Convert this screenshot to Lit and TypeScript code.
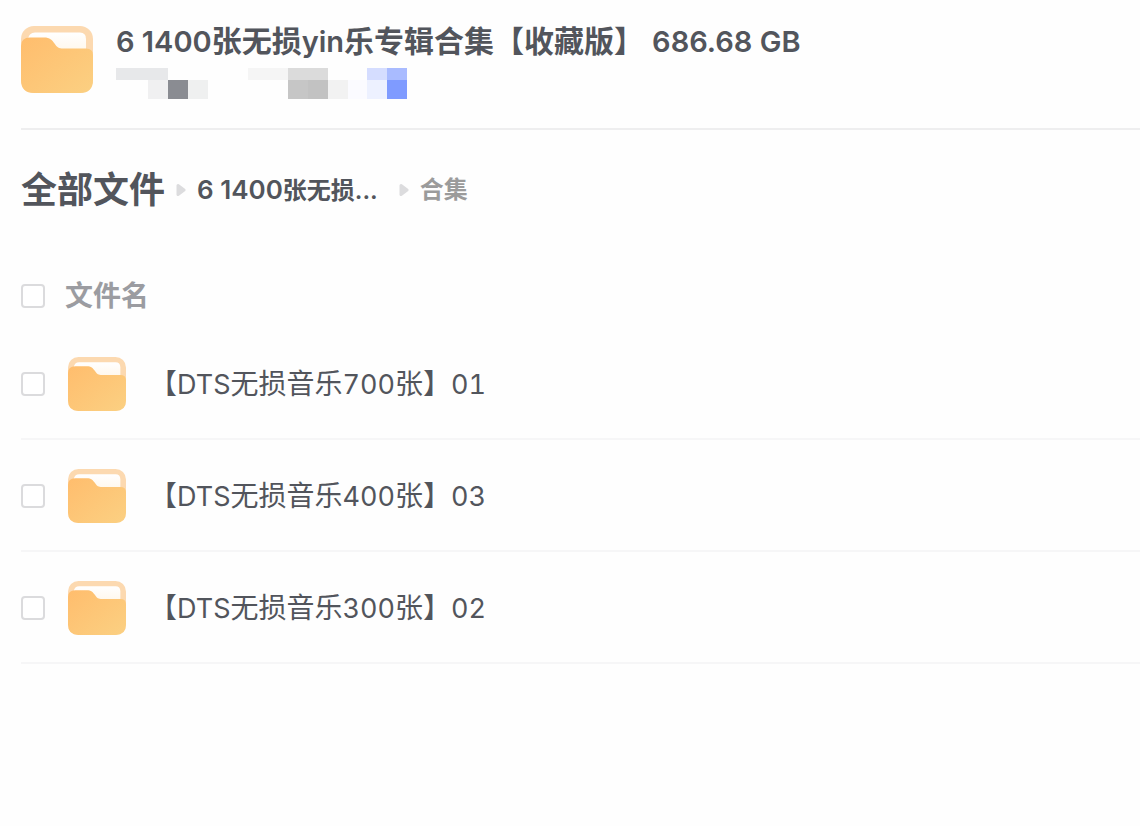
import { LitElement, html, css, svg } from "lit";
import { customElement, property, state } from "lit/decorators.js";

interface FileEntry {
  id: string;
  name: string;
}

/* Wraps runs of Latin letters and digits so they can be sized against the Chinese text. */
const mixed = (text: string) =>
  text
    .split(/([0-9A-Za-z][0-9A-Za-z. ]*)/)
    .filter((part) => part !== "")
    .map((part) => (/^[0-9A-Za-z]/.test(part) ? html`<span class="latin">${part}</span>` : part));

@customElement("folder-icon")
class FolderIcon extends LitElement {
  static styles = css`
    :host {
      display: block;
    }
    svg {
      display: block;
      width: 100%;
      height: auto;
    }
  `;

  render() {
    return html`
      <svg viewBox="0 0 72 67" aria-hidden="true">
        <defs>
          <linearGradient id="front" x1="0" y1="0" x2="1" y2="1">
            <stop offset="0" stop-color="#ffbd6d" />
            <stop offset="1" stop-color="#fbd082" />
          </linearGradient>
          <linearGradient id="paper" x1="0" y1="0" x2="0" y2="1">
            <stop offset="0" stop-color="#ffffff" />
            <stop offset="1" stop-color="#fff6e8" />
          </linearGradient>
        </defs>
        <rect width="72" height="67" rx="13" fill="#fcd9b0" />
        <path d="M7 13 Q8 6.5 14 6.5 H59 Q65 6.5 65 13 V28 H7 Z" fill="url(#paper)" />
        <path
          d="M0 20 Q0 11.5 9 11.5 H23 C29 11.5 31 14 33.5 17.5 C36 21.5 38 22.5 42 22.5 H65 Q72 22.5 72 29 V54 Q72 67 59 67 H13 Q0 67 0 54 Z"
          fill="url(#front)"
        />
      </svg>
    `;
  }
}

@customElement("share-mosaic")
class ShareMosaic extends LitElement {
  static styles = css`
    :host,
    svg {
      display: block;
    }
  `;

  private tiles: [number, number, number, number, string][] = [
    [0, 0, 52, 12, "#e7e8ea"],
    [32, 12, 20, 19, "#f0f0f1"],
    [52, 12, 20, 19, "#8a8c92"],
    [72, 12, 20, 19, "#eff0f0"],
    [132, 0, 40, 12, "#f5f5f5"],
    [172, 0, 40, 12, "#dbdbdb"],
    [172, 12, 20, 19, "#c6c6c6"],
    [192, 12, 20, 19, "#c2c2c2"],
    [212, 12, 20, 19, "#f2f2f2"],
    [232, 12, 19, 19, "#fbfbff"],
    [251, 0, 20, 12, "#d5ddff"],
    [251, 12, 20, 19, "#edf1ff"],
    [271, 0, 20, 12, "#a9bbff"],
    [271, 12, 20, 19, "#7f9bff"],
  ];

  render() {
    return html`
      <svg width="291" height="31" viewBox="0 0 291 31" shape-rendering="crispEdges" aria-hidden="true">
        ${this.tiles.map(
          ([x, y, w, h, fill]) => svg`<rect x=${x} y=${y} width=${w} height=${h} fill=${fill} />`
        )}
      </svg>
    `;
  }
}

@customElement("share-header")
class ShareHeader extends LitElement {
  @property() name = "";
  @property() size = "";

  static styles = css`
    .header {
      display: flex;
      align-items: flex-start;
      gap: 23px;
      padding: 26px 0 29px;
      border-bottom: 2px solid #eeeeef;
    }
    .icon {
      flex: none;
      width: 72px;
    }
    .title {
      display: flex;
      gap: 8px;
      margin: 0 0 11px;
      font-size: 30px;
      font-weight: 600;
      line-height: 30px;
      white-space: nowrap;
    }
    .latin {
      font-size: 29px;
    }
  `;

  render() {
    return html`
      <header class="header">
        <folder-icon class="icon"></folder-icon>
        <div>
          <h1 class="title"><span>${mixed(this.name)}</span><span>${mixed(this.size)}</span></h1>
          <share-mosaic></share-mosaic>
        </div>
      </header>
    `;
  }
}

@customElement("path-trail")
class PathTrail extends LitElement {
  static styles = css`
    .trail {
      display: flex;
      align-items: center;
      height: 40px;
      padding: 40px 0 54px;
      font-size: 24px;
      font-weight: 600;
      line-height: 40px;
      white-space: nowrap;
    }
    a {
      color: inherit;
      text-decoration: none;
    }
    .root {
      font-size: 36px;
    }
    .latin {
      font-size: 26px;
    }
    .arrow {
      flex: none;
      width: 10px;
      height: 14px;
      margin: 0 11px;
    }
    .parent {
      margin-right: 10px;
    }
    .current {
      color: #9b9b9b;
    }
  `;

  private arrow() {
    return html`
      <svg class="arrow" viewBox="0 0 10 14" aria-hidden="true">
        <path d="M2 2.5 L8 7 L2 11.5 Z" fill="#dcdcde" stroke="#dcdcde" stroke-width="3" stroke-linejoin="round" />
      </svg>
    `;
  }

  render() {
    return html`
      <nav class="trail">
        <a class="root" href="#all">全部文件</a>
        ${this.arrow()}
        <a class="parent" href="#parent">${mixed("6 1400张无损...")}</a>
        ${this.arrow()}
        <span class="current">合集</span>
      </nav>
    `;
  }
}

@customElement("file-table")
class FileTable extends LitElement {
  @property({ attribute: false }) files: FileEntry[] = [];
  @state() private picked = new Set<string>();

  static styles = css`
    table {
      width: 100%;
      border-collapse: separate;
      border-spacing: 0;
      table-layout: fixed;
    }
    th,
    td {
      padding: 0;
      text-align: left;
      vertical-align: middle;
    }
    .check {
      width: 44px;
    }
    .head th {
      height: 64px;
      color: #9b9ca1;
      font-size: 28px;
      font-weight: 600;
      line-height: 40px;
    }
    .row td {
      height: 108px;
      padding-top: 2px;
      border-bottom: 2px solid #f6f6f7;
    }
    input {
      display: block;
      appearance: none;
      box-sizing: border-box;
      width: 24px;
      height: 24px;
      margin: 0;
      border: 2px solid #dbdbdd;
      border-radius: 4px;
      background: #ffffff;
    }
    input:checked {
      border-color: #7f9bff;
      background: #7f9bff;
    }
    .file {
      display: flex;
      align-items: center;
      gap: 23px;
      padding-left: 3px;
    }
    .icon {
      flex: none;
      width: 58px;
    }
    .name {
      color: inherit;
      font-size: 28px;
      font-variant-numeric: tabular-nums;
      line-height: 40px;
      text-decoration: none;
      white-space: nowrap;
    }
    .latin {
      font-size: 27px;
    }
  `;

  private toggle(id: string) {
    const next = new Set(this.picked);
    if (!next.delete(id)) next.add(id);
    this.picked = next;
  }

  private toggleAll() {
    const full = this.picked.size === this.files.length;
    this.picked = new Set(full ? [] : this.files.map((f) => f.id));
  }

  render() {
    return html`
      <table>
        <thead>
          <tr class="head">
            <th class="check">
              <input
                type="checkbox"
                aria-labelledby="column"
                .checked=${this.files.length > 0 && this.picked.size === this.files.length}
                @change=${this.toggleAll}
              />
            </th>
            <th id="column">文件名</th>
          </tr>
        </thead>
        <tbody>
          ${this.files.map(
            (file) => html`
              <tr class="row">
                <td>
                  <input
                    type="checkbox"
                    aria-labelledby=${file.id}
                    .checked=${this.picked.has(file.id)}
                    @change=${() => this.toggle(file.id)}
                  />
                </td>
                <td>
                  <div class="file">
                    <folder-icon class="icon"></folder-icon>
                    <a class="name" id=${file.id} href="#${file.id}">${mixed(file.name)}</a>
                  </div>
                </td>
              </tr>
            `
          )}
        </tbody>
      </table>
    `;
  }
}

@customElement("app-root")
class AppRoot extends LitElement {
  static styles = css`
    :host {
      display: block;
      box-sizing: border-box;
      min-height: 100vh;
      padding-left: 21px;
      overflow: hidden;
      background: #fefefe;
      color: #52555c;
      font-family: Inter, "Noto Sans CJK SC", sans-serif;
    }
  `;

  private files: FileEntry[] = [
    { id: "dts-01", name: "【DTS无损音乐700张】01" },
    { id: "dts-03", name: "【DTS无损音乐400张】03" },
    { id: "dts-02", name: "【DTS无损音乐300张】02" },
  ];

  render() {
    return html`
      <share-header name="6 1400张无损yin乐专辑合集【收藏版】" size="686.68 GB"></share-header>
      <main>
        <path-trail></path-trail>
        <file-table .files=${this.files}></file-table>
      </main>
    `;
  }
}
